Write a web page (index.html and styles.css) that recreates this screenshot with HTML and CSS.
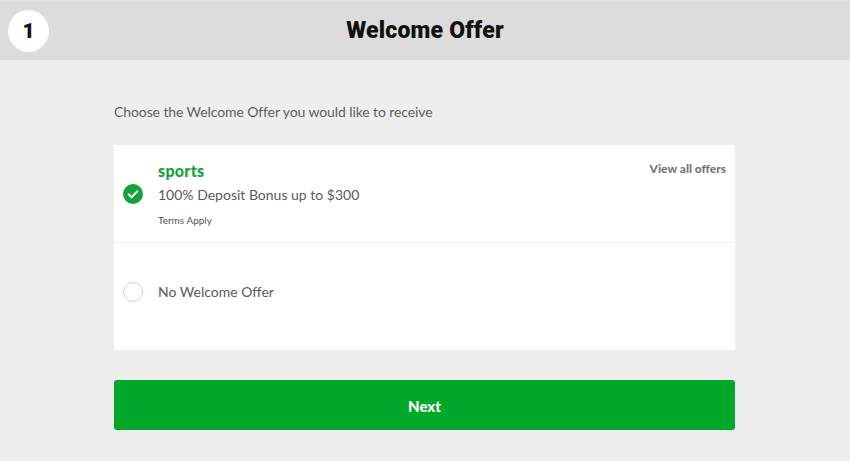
FILE: index.html
```html
<!DOCTYPE html>
<html lang="en">
<head>
<meta charset="utf-8">
<title>Welcome Offer</title>
<link rel="stylesheet" href="styles.css">
</head>
<body>
<header class="topbar">
  <div class="step">1</div>
  <h1 class="title">Welcome Offer</h1>
  <div class="spacer"></div>
</header>
<main class="content">
  <p class="intro">Choose the Welcome Offer you would like to receive</p>
  <section class="card">
    <div class="option option-selected">
      <span class="check">
        <svg width="20" height="20" viewBox="0 0 20 20"><circle cx="10" cy="10" r="10" fill="#12a33a"/><path d="M5.6 10.3 L8.6 13.2 L14.4 7.2" fill="none" stroke="#fff" stroke-width="2" stroke-linecap="round" stroke-linejoin="round"/></svg>
      </span>
      <div class="option-text">
        <div class="brand">sports</div>
        <div class="offer">100% Deposit Bonus up to $300</div>
        <div class="terms">Terms Apply</div>
      </div>
      <a class="view-all" href="#">View all offers</a>
    </div>
    <div class="option option-none">
      <span class="radio"></span>
      <div class="offer">No Welcome Offer</div>
    </div>
  </section>
  <button class="next">Next</button>
</main>
</body>
</html>
```
FILE: styles.css
```css
* { box-sizing: border-box; }
html, body { margin: 0; padding: 0; }
body {
  background: #eeeeee;
  font-family: Lato, "Open Sans", sans-serif;
  color: #555;
  width: 850px;
  height: 461px;
  overflow: hidden;
}
.topbar {
  height: 60px;
  background: #dcdcdc;
  border-top: 1px solid #e6e6e6;
  display: flex;
  align-items: center;
  padding-left: 8px;
}
.step {
  width: 41px;
  height: 42px;
  border-radius: 50%;
  background: #fff;
  display: flex;
  align-items: center;
  justify-content: center;
  font-family: Roboto, sans-serif;
  font-weight: 900;
  font-size: 21px;
  color: #111;
}
.title {
  flex: 1;
  margin: 0;
  text-align: center;
  font-family: Roboto, sans-serif;
  font-weight: 900;
  font-size: 23px;
  color: #111;
  letter-spacing: 0.2px;
}
.spacer { width: 49px; }
.content {
  width: 621px;
  margin-left: 114px;
}
.intro {
  margin: 42px 0 23px;
  font-size: 14px;
  line-height: 20px;
  color: #5f5f5f;
  letter-spacing: -0.1px;
}
.card {
  background: #fff;
}
.option {
  position: relative;
  display: flex;
  align-items: center;
  padding-left: 9px;
}
.option-selected {
  height: 98px;
  border-bottom: 1px solid #f0f0f0;
}
.option-none {
  height: 107px;
  align-items: flex-start;
  padding-top: 39px;
}
.check { width: 20px; height: 20px; display: block; margin-right: 15px; }
.check svg { display: block; }
.radio {
  width: 20px;
  height: 20px;
  border-radius: 50%;
  border: 1px solid #d0d0d0;
  margin-right: 15px;
  flex: none;
}
.option-text { padding-top: 0; }
.brand {
  color: #12a33a;
  font-weight: 900;
  font-size: 16px;
  line-height: 20px;
  letter-spacing: 0.3px;
  font-family: Lato, sans-serif;
}
.offer {
  font-size: 14px;
  line-height: 20px;
  color: #5a5a5a;
  margin-top: 4px;
}
.option-none .offer { margin-top: 0; }
.terms {
  font-size: 10px;
  line-height: 14px;
  color: #555;
  margin-top: 8px;
}
.view-all {
  position: absolute;
  top: 17px;
  right: 9px;
  font-size: 12px;
  line-height: 14px;
  font-weight: 900;
  color: #777;
  text-decoration: none;
}
.next {
  display: block;
  width: 100%;
  height: 50px;
  margin-top: 30px;
  padding-top: 3px;
  border: 0;
  border-radius: 3px;
  background: #00a82a;
  color: #fff;
  font-family: Lato, sans-serif;
  font-weight: 900;
  font-size: 15px;
}
```
